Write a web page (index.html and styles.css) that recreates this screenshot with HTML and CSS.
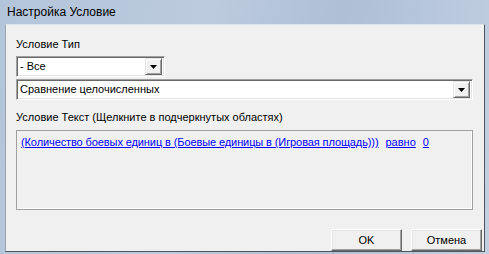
FILE: index.html
```html
<!DOCTYPE html>
<html lang="ru">
<head>
<meta charset="utf-8">
<title>Настройка Условие</title>
<link rel="stylesheet" href="styles.css">
</head>
<body>
<div class="window">
  <div class="titlebar">Настройка Условие</div>
  <div class="client">
    <div class="label">Условие Тип</div>
    <div class="combo combo-short">
      <span class="combo-text">- Все</span>
      <span class="combo-btn"><svg width="7" height="4" viewBox="0 0 7 4"><path d="M0 0H7L3.5 4Z" fill="#000"/></svg></span>
    </div>
    <div class="combo combo-wide">
      <span class="combo-text">Сравнение целочисленных</span>
      <span class="combo-btn"><svg width="7" height="4" viewBox="0 0 7 4"><path d="M0 0H7L3.5 4Z" fill="#000"/></svg></span>
    </div>
    <div class="label label-text">Условие Текст (Щелкните в подчеркнутых областях)</div>
    <div class="textbox">
      <a class="link" href="#">(Количество боевых единиц в (Боевые единицы в (Игровая площадь)))</a><a class="link link-gap" href="#">равно</a><a class="link link-gap" href="#">0</a>
    </div>
    <div class="buttons">
      <button class="btn">OK</button>
      <button class="btn">Отмена</button>
    </div>
  </div>
</div>
</body>
</html>
```

FILE: styles.css
```css
html, body {
  margin: 0;
  padding: 0;
}
body {
  width: 489px;
  height: 254px;
  overflow: hidden;
  background: linear-gradient(100deg, #b3c5da 0%, #bccbdd 40%, #aebfd6 65%, #c2d0e1 100%);
  font-family: "Liberation Sans", Arial, sans-serif;
}
.window {
  display: flex;
  flex-direction: column;
}
.titlebar {
  height: 19px;
  padding: 5px 0 0 7px;
  font-size: 12px;
  line-height: 15px;
  color: #000;
}
.client {
  margin-left: 5px;
  width: 457px;
  height: 226px;
  padding: 0 11px 0 10px;
  background: #f0f0f0;
  border-top: 1px solid #dfe4ea;
  border-left: 1px solid #9ea4ab;
  border-right: 1px solid #4f555c;
  border-bottom: 1px solid #4f555c;
  display: flex;
  flex-direction: column;
  font-size: 11px;
  line-height: 13px;
}
.label {
  margin-top: 13px;
  color: #000;
}
.combo {
  box-sizing: border-box;
  height: 21px;
  background: #fff;
  border-top: 1px solid #a0a0a0;
  border-left: 1px solid #a0a0a0;
  border-right: 1px solid #fff;
  border-bottom: 1px solid #fff;
  box-shadow: inset 1px 1px 0 #696969, inset -1px -1px 0 #e3e3e3;
  display: flex;
  align-items: center;
  justify-content: space-between;
  padding: 1px 2px 1px 2px;
}
.combo-short {
  margin-top: 5px;
  width: 149px;
}
.combo-wide {
  margin-top: 2px;
  width: 457px;
}
.combo-text {
  padding-left: 1px;
  color: #000;
}
.combo-btn {
  box-sizing: border-box;
  width: 17px;
  height: 17px;
  background: #f0f0f0;
  border-top: 1px solid #e3e3e3;
  border-left: 1px solid #e3e3e3;
  border-right: 1px solid #696969;
  border-bottom: 1px solid #696969;
  box-shadow: inset 1px 1px 0 #fff, inset -1px -1px 0 #a0a0a0;
  display: flex;
  align-items: center;
  justify-content: center;
}
.combo-btn svg {
  display: block;
  margin-top: 1px;
}
.label-text {
  margin-top: 11px;
}
.textbox {
  box-sizing: border-box;
  margin-top: 6px;
  width: 457px;
  height: 80px;
  border: 1px solid #a0a0a0;
  box-shadow: inset -1px -1px 0 #fff;
  padding: 5px 4px;
}
.link {
  color: #0000ff;
  text-decoration: underline;
}
.textbox .link:first-child {
  letter-spacing: -0.1px;
}
.link-gap {
  margin-left: 7px;
}
.buttons {
  display: flex;
  justify-content: flex-end;
  gap: 9px;
  margin-top: 19px;
  margin-right: -9px;
}
.btn {
  box-sizing: border-box;
  width: 71px;
  height: 22px;
  margin: 0;
  padding: 0;
  font-family: "Liberation Sans", Arial, sans-serif;
  font-size: 11px;
  color: #000;
  background: #f0f0f0;
  border-top: 1px solid #fff;
  border-left: 1px solid #fff;
  border-right: 1px solid #696969;
  border-bottom: 1px solid #696969;
  box-shadow: inset -1px -1px 0 #a0a0a0, inset 1px 1px 0 #e3e3e3;
}
```
